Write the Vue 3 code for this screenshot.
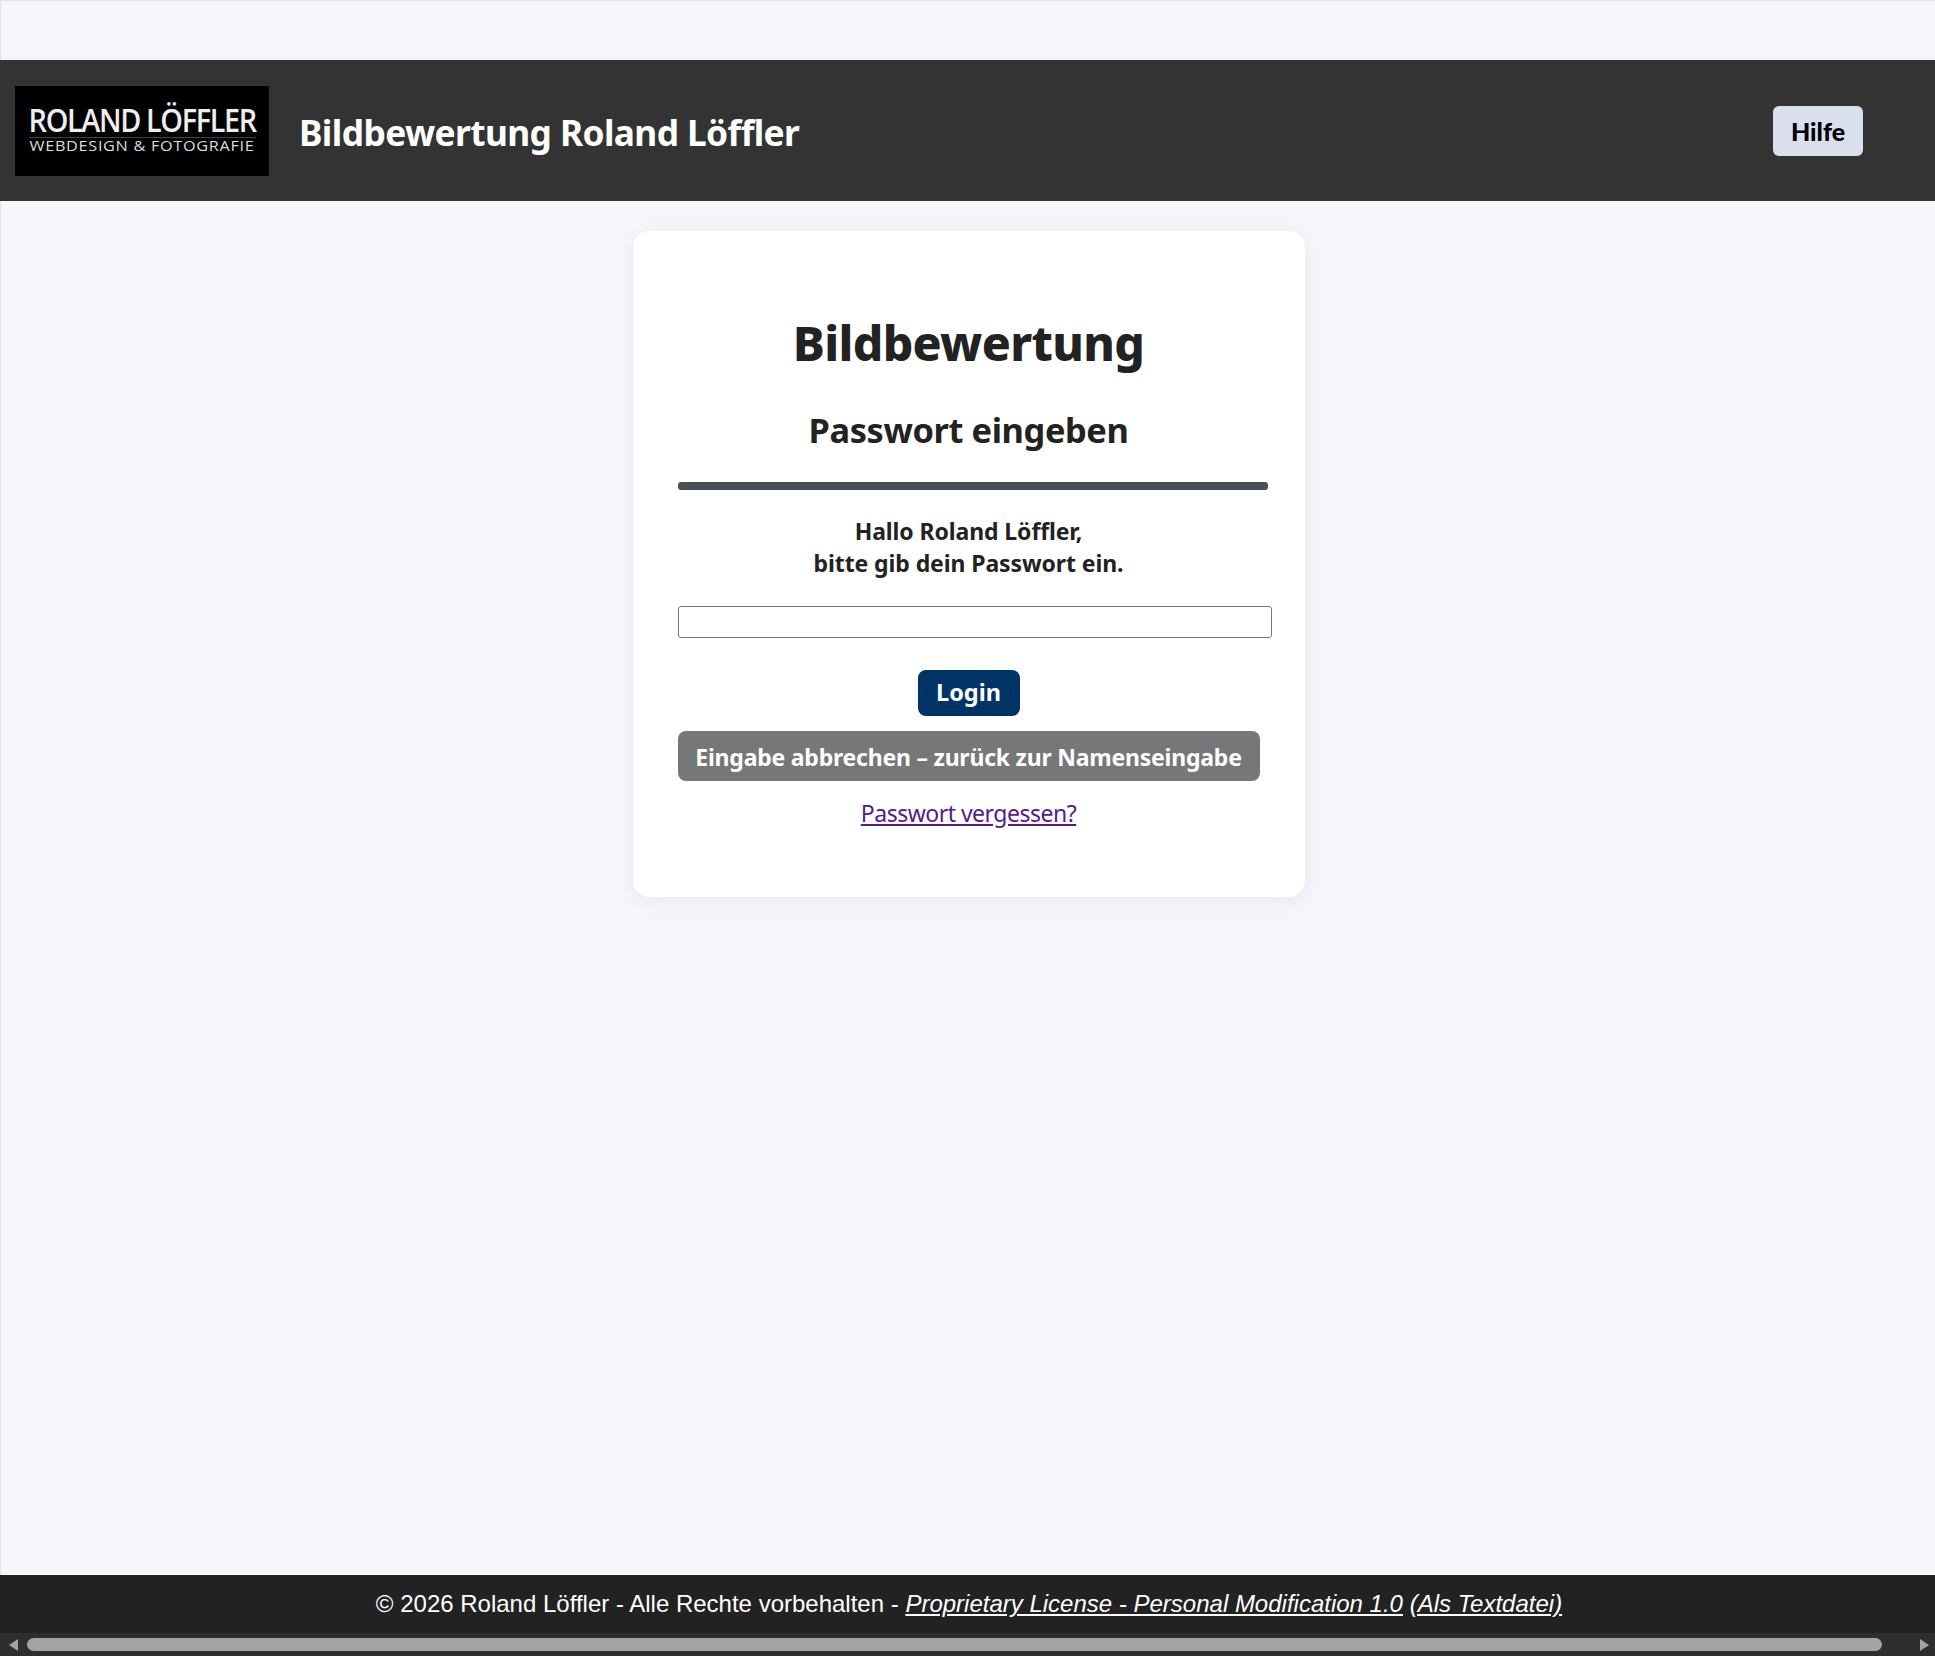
<script setup>
const title = 'Bildbewertung Roland Löffler'
</script>

<template>
  <div class="page">
    <div class="topgap"></div>
    <header class="head">
      <div class="logo">
        <div class="logo-name"><span>ROLAND LÖFFLER</span></div>
        <div class="logo-sub"><span>WEBDESIGN &amp; FOTOGRAFIE</span></div>
      </div>
      <div class="head-title">{{ title }}</div>
      <button class="help">Hilfe</button>
    </header>
    <main class="main">
      <section class="card">
        <h1>Bildbewertung</h1>
        <h2>Passwort eingeben</h2>
        <hr class="rule" />
        <p class="hello">Hallo Roland Löffler,<br />bitte gib dein Passwort ein.</p>
        <input class="pw" type="password" />
        <div class="center"><button class="login">Login</button></div>
        <button class="cancel">Eingabe abbrechen – zurück zur Namenseingabe</button>
        <div class="center"><a class="forgot" href="#">Passwort vergessen?</a></div>
      </section>
    </main>
    <footer class="foot">
      © 2026 Roland Löffler - Alle Rechte vorbehalten -&nbsp;<a href="#">Proprietary License - Personal Modification 1.0</a>&nbsp;<a href="#">(Als Textdatei)</a>
    </footer>
    <div class="sbar">
      <span class="arrow left"></span>
      <span class="thumb"></span>
      <span class="arrow right"></span>
    </div>
  </div>
</template>

<style>
html, body { margin: 0; padding: 0; overflow: hidden; }
</style>

<style scoped>
.page {
  height: 1656px;
  display: flex;
  flex-direction: column;
  background: #f4f6fb;
  font-family: "Noto Sans", "Open Sans", sans-serif;
  color: #222;
  box-shadow: inset 1px 1px 0 #e2e4e9;
}
.topgap { height: 60px; flex: none; }
.head {
  height: 141px;
  flex: none;
  background: #333;
  display: flex;
  align-items: center;
  padding: 0 72px 0 15px;
  box-sizing: border-box;
}
.logo {
  width: 254px;
  height: 90px;
  box-sizing: border-box;
  padding-top: 17px;
  background: #000;
  color: #eee;
  display: flex;
  flex-direction: column;
  align-items: center;
  margin-top: 1px;
  flex: none;
}
.logo-name {
  width: 227px;
  display: flex;
  justify-content: center;
  font-family: "Open Sans", sans-serif;
  font-size: 32px;
  line-height: 34px;
  font-weight: 600;
  border-bottom: 1px solid #444;
  white-space: nowrap;
}
.logo-name span {
  display: block;
  flex: none;
  letter-spacing: -1.5px;
  transform: scaleX(0.9);
  transform-origin: center;
}
.logo-sub {
  display: flex;
  justify-content: center;
  font-family: "Open Sans", sans-serif;
  font-size: 14px;
  line-height: 15px;
  letter-spacing: 0.6px;
  color: #ddd;
  white-space: nowrap;
}
.logo-sub span {
  display: block;
  flex: none;
  transform: scaleX(1.16);
  transform-origin: center;
}
.head-title {
  margin-left: 30px;
  margin-top: 3px;
  flex: 1;
  color: #fff;
  font-weight: 700;
  font-size: 35.3px;
  letter-spacing: -0.6px;
}
.help {
  width: 90px;
  height: 50px;
  border: 0;
  border-radius: 6px;
  background: #d9dfec;
  color: #000;
  font-family: "Lato", sans-serif;
  font-weight: 900;
  font-size: 25px;
  padding: 1px 0 0;
}
.main {
  flex: 1;
  display: flex;
  justify-content: center;
  align-items: flex-start;
  padding-top: 30px;
  padding-left: 2px;
}
.card {
  width: 672px;
  height: 666px;
  box-sizing: border-box;
  background: #fff;
  border-radius: 16px;
  padding: 0 45px;
  box-shadow: 0 4px 20px rgba(0, 0, 0, 0.06);
}
h1 {
  margin: 0;
  padding-top: 84px;
  height: 128px;
  line-height: 56px;
  box-sizing: border-box;
  text-align: center;
  font-size: 48px;
  font-weight: 800;
  letter-spacing: -0.65px;
}
h2 {
  margin: 0;
  height: 123px;
  padding-top: 48px;
  box-sizing: border-box;
  line-height: 46px;
  text-align: center;
  font-size: 34.4px;
  font-weight: 700;
  letter-spacing: -0.4px;
}
.rule {
  width: 590px;
  height: 8px;
  border: 0;
  margin: 0;
  background: #4a4f57;
  border-radius: 3px;
}
.hello {
  margin: 25px 0 0;
  text-align: center;
  font-size: 23px;
  font-weight: 700;
  line-height: 32px;
  letter-spacing: -0.1px;
}
.pw {
  display: block;
  width: 594px;
  height: 32px;
  box-sizing: border-box;
  margin-top: 27px;
  border: 1px solid #767676;
  border-radius: 3px;
  background: #fff;
  padding: 0;
}
.center { display: flex; justify-content: center; }
.login {
  width: 102px;
  height: 46px;
  margin-top: 32px;
  border: 0;
  border-radius: 8px;
  background: #003366;
  color: #fff;
  font-family: "Noto Sans", sans-serif;
  font-weight: 700;
  font-size: 23.5px;
  padding: 0 0 2px;
}
.cancel {
  display: block;
  width: 100%;
  height: 50px;
  margin-top: 15px;
  border: 0;
  border-radius: 8px;
  background: #777;
  color: #fff;
  font-family: "Noto Sans", sans-serif;
  font-weight: 700;
  font-size: 23px;
  letter-spacing: -0.22px;
  padding: 2px 0 0;
  white-space: nowrap;
}
.forgot {
  margin-top: 16px;
  font-size: 23px;
  line-height: 32px;
  color: #551a8b;
  letter-spacing: -0.5px;
}
.foot {
  height: 58px;
  flex: none;
  background: #222;
  color: #fff;
  display: flex;
  align-items: center;
  justify-content: center;
  padding-left: 3px;
  box-sizing: border-box;
  font-family: "Liberation Sans", Arial, sans-serif;
  font-size: 24px;
}
.foot a { color: #fff; font-style: italic; }
.sbar {
  height: 23px;
  flex: none;
  background: #2e2e2e;
  display: flex;
  align-items: center;
  padding: 0 6px 0 9px;
  box-sizing: border-box;
}
.thumb {
  width: 1855px;
  height: 13px;
  margin-left: 9px;
  margin-right: 38px;
  border-radius: 7px;
  background: #a3a3a3;
}
.arrow {
  width: 0;
  height: 0;
  border-top: 6px solid transparent;
  border-bottom: 6px solid transparent;
  flex: none;
}
.arrow.left { border-right: 9px solid #a3a3a3; }
.arrow.right { border-left: 9px solid #a3a3a3; }
</style>
